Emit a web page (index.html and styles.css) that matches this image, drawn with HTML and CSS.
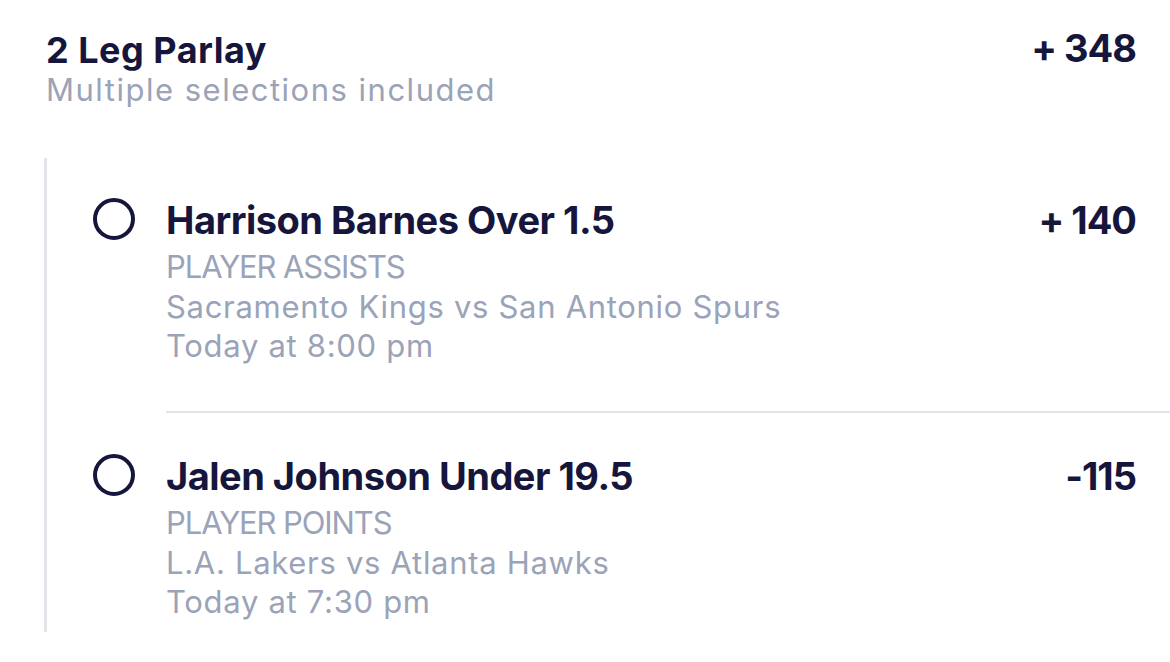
FILE: index.html
```html
<!DOCTYPE html>
<html lang="en">
<head>
<meta charset="utf-8">
<title>2 Leg Parlay</title>
<link rel="stylesheet" href="styles.css">
</head>
<body>
<div class="slip">
  <div class="slip-header">
    <div class="slip-titles">
      <div class="slip-title">2 Leg Parlay</div>
      <div class="slip-sub">Multiple selections included</div>
    </div>
    <div class="slip-odds">+ 348</div>
  </div>
  <div class="legs">
    <div class="leg leg-first">
      <div class="leg-mark"><span class="ring"></span></div>
      <div class="leg-body">
        <div class="leg-head">
          <div class="leg-title">Harrison Barnes Over 1.5</div>
          <div class="leg-odds">+ 140</div>
        </div>
        <div class="leg-meta leg-market">PLAYER ASSISTS</div>
        <div class="leg-meta">Sacramento Kings vs San Antonio Spurs</div>
        <div class="leg-meta">Today at 8:00 pm</div>
      </div>
    </div>
    <div class="leg leg-next">
      <div class="leg-mark"><span class="ring"></span></div>
      <div class="leg-body">
        <div class="leg-head">
          <div class="leg-title">Jalen Johnson Under 19.5</div>
          <div class="leg-odds">-115</div>
        </div>
        <div class="leg-meta leg-market">PLAYER POINTS</div>
        <div class="leg-meta">L.A. Lakers vs Atlanta Hawks</div>
        <div class="leg-meta">Today at 7:30 pm</div>
      </div>
    </div>
  </div>
</div>
</body>
</html>
```

FILE: styles.css
```css
html, body {
  margin: 0;
  padding: 0;
  background: #ffffff;
}
body {
  font-family: Inter, "Noto Sans", sans-serif;
  color: #16163d;
  width: 1170px;
  height: 662px;
  overflow: hidden;
}
.slip {
  padding: 28px 0 0 46px;
}
.slip-header {
  display: flex;
  justify-content: space-between;
  align-items: flex-start;
  padding-right: 34px;
}
.slip-title {
  font-size: 36px;
  font-weight: 700;
  line-height: 44px;
  letter-spacing: 0.5px;
}
.slip-sub {
  font-size: 31px;
  line-height: 36px;
  letter-spacing: 1.5px;
  color: #9aa3b7;
}
.slip-odds {
  font-size: 38px;
  font-weight: 700;
  line-height: 40px;
  letter-spacing: -1px;
}
.legs {
  margin-top: 50px;
  margin-left: -2px;
  border-left: 3px solid #e2e4ea;
}
.leg {
  display: flex;
}
.leg-mark {
  width: 119px;
  flex: none;
  box-sizing: border-box;
  padding-left: 46px;
}
.ring {
  display: block;
  width: 42px;
  height: 42px;
  box-sizing: border-box;
  border: 4.5px solid #16163d;
  border-radius: 50%;
}
.leg-first .leg-mark {
  padding-top: 40px;
}
.leg-next .leg-mark {
  padding-top: 43px;
}
.leg-body {
  flex: 1;
}
.leg-first .leg-body {
  padding: 38px 0 45.5px;
}
.leg-next .leg-body {
  border-top: 2px solid #e3e4e9;
  padding: 39px 0 10.5px;
}
.leg-head {
  display: flex;
  justify-content: space-between;
  align-items: baseline;
  padding-right: 34px;
  margin-bottom: 3px;
}
.leg-title {
  font-size: 38px;
  font-weight: 700;
  line-height: 48px;
  letter-spacing: -0.5px;
}
.leg-odds {
  font-size: 38px;
  font-weight: 700;
  line-height: 48px;
  letter-spacing: -1px;
}
.leg-meta {
  font-size: 31px;
  line-height: 39.5px;
  letter-spacing: 0.7px;
  color: #9aa3b7;
}
.leg-market {
  letter-spacing: -1.1px;
}
```
